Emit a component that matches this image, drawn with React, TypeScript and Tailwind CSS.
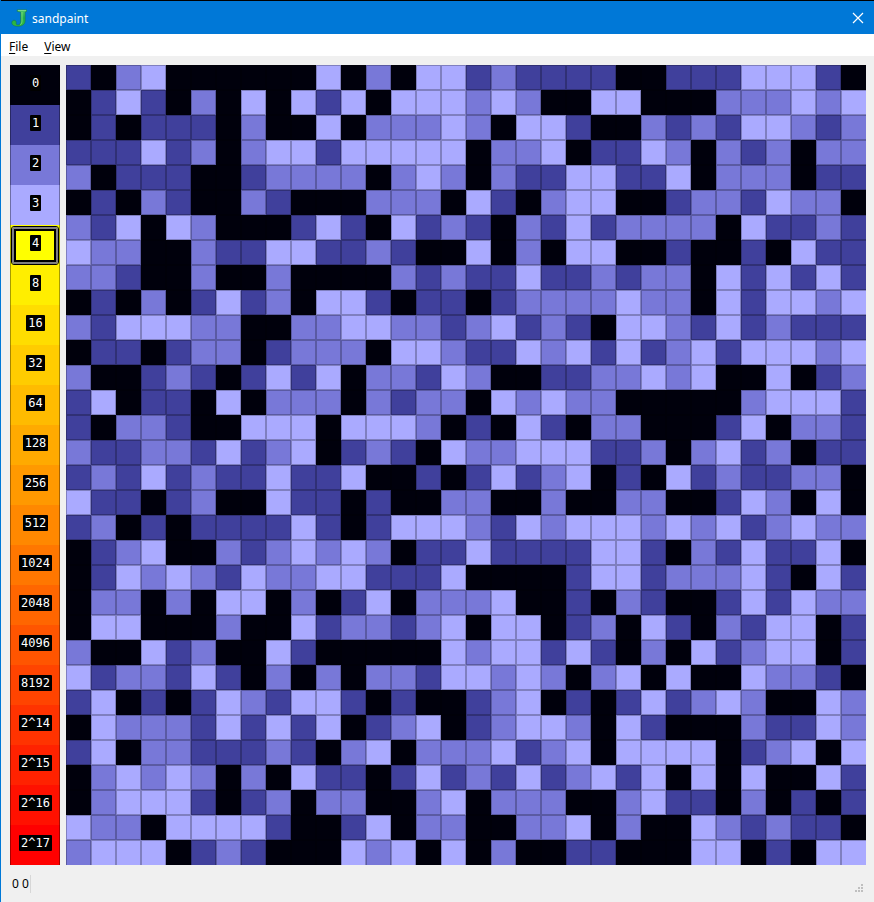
import { useState } from "react";

const swatches = [
  { label: "0", color: "bg-[#00000c]" },
  { label: "1", color: "bg-[#40409c]" },
  { label: "2", color: "bg-[#7878d8]" },
  { label: "3", color: "bg-[#aaaaff]" },
  { label: "4", color: "bg-[#ffff00]" },
  { label: "8", color: "bg-[#ffee00]" },
  { label: "16", color: "bg-[#ffdd00]" },
  { label: "32", color: "bg-[#ffcc00]" },
  { label: "64", color: "bg-[#ffbb00]" },
  { label: "128", color: "bg-[#ffaa00]" },
  { label: "256", color: "bg-[#ff9900]" },
  { label: "512", color: "bg-[#ff8800]" },
  { label: "1024", color: "bg-[#ff7700]" },
  { label: "2048", color: "bg-[#ff6600]" },
  { label: "4096", color: "bg-[#ff5500]" },
  { label: "8192", color: "bg-[#ff4400]" },
  { label: "2^14", color: "bg-[#ff3300]" },
  { label: "2^15", color: "bg-[#ff2200]" },
  { label: "2^16", color: "bg-[#ff1100]" },
  { label: "2^17", color: "bg-[#ff0000]" },
];

// One digit per cell: the number of sand grains, 0 to 3.
const rows = [
  "10230000003020331211110011133310",
  "01310203031303332320033000222323",
  "01011102003022232033100212133212",
  "11131202331333330223011320212022",
  "20111001222202320211331130222011",
  "01021002100022203102330012213220",
  "21303200013103121021312222031121",
  "32200211331121003020330010010311",
  "22100200200002121131121220313131",
  "01020131203310110122223220313323",
  "21333220022332212312103321312111",
  "01101220122203321132313123133323",
  "20012101313022132001122323003012",
  "13011030222021220323220000023331",
  "10221003330333201031022000130221",
  "21122131230121032233311202312011",
  "12131211311300101312301031211220",
  "31101200311010022002002200132030",
  "12010111131013332132333232312322",
  "01230021232320113111133102131130",
  "01323213223311130000133122231031",
  "02202033020130222300102100131322",
  "03300020031221230330120310213301",
  "20031200310000032331310203123301",
  "31221310202022133232023030032210",
  "13010132133101001230101312320032",
  "03222131313012301233203100021132",
  "13022111210230222312303333012303",
  "02323202031101312131231303030031",
  "02333101202200230222002311020101",
  "32203333100130220022302003212110",
  "23330121000323030200110003301033",
];

function Cell({ value, lastCol, lastRow }: { value: number; lastCol: boolean; lastRow: boolean }) {
  return (
    <div
      className={`aspect-square border-l border-t border-black/25 ${swatches[value].color} ${
        lastCol ? "" : "border-r"
      } ${lastRow ? "" : "border-b"}`}
    />
  );
}

function Logo() {
  return (
    <svg viewBox="0 0 16 18" className="h-[18px] w-4" aria-hidden="true">
      <defs>
        <linearGradient id="leaf" x1="0" y1="0" x2="0" y2="1">
          <stop offset="0" stopColor="#4fc86a" />
          <stop offset="0.5" stopColor="#1fae4c" />
          <stop offset="1" stopColor="#35bd3c" />
        </linearGradient>
      </defs>
      <path
        d="M6.2 .8H15.8V2.4L14.2 3V11.2C14.2 15.4 11.4 17.3 6.8 17.3C3 17.3 .8 15.9 .8 13.7C.8 12.2 1.8 11.3 3.1 11.3C4.5 11.3 5.3 12.2 5.3 13.3C5.3 14.2 5 14.6 5.2 15.1C5.5 15.7 6.2 15.9 6.9 15.9C8.8 15.9 9.6 14.6 9.6 12V3.2L6.2 2.4Z"
        fill="url(#leaf)"
        stroke="#14704a"
        strokeWidth="0.5"
      />
      <path d="M11 3V12.2C11 13.6 10.4 14.8 9.4 15.6" fill="none" stroke="#7fe07c" strokeWidth="0.9" />
      <path d="M7 1.5H15" stroke="#8fe49a" strokeWidth="0.7" />
    </svg>
  );
}

export default function App() {
  const [selected, setSelected] = useState(4);

  return (
    <div className="flex min-h-screen flex-col border-l border-[#0078d7] bg-[#f0f0f0] font-['Noto_Sans','Open_Sans',sans-serif] text-xs text-black">
      <header className="flex h-[34px] items-center border-t border-black bg-[#0078d7] pr-2 pl-[10px] text-white">
        <Logo />
        <h1 className="ml-[5px] flex-1 pt-[2px]">sandpaint</h1>
        <button type="button" aria-label="Close" className="flex size-4 items-center justify-center">
          <svg viewBox="0 0 12 12" className="size-3" aria-hidden="true">
            <path d="M1 1L11 11M11 1L1 11" stroke="currentColor" strokeWidth="1.2" />
          </svg>
        </button>
      </header>

      <nav className="flex h-[22px] items-center gap-4 bg-white px-2 pt-1">
        <button type="button">
          <span className="underline underline-offset-2">F</span>ile
        </button>
        <button type="button">
          <span className="underline underline-offset-2">V</span>iew
        </button>
      </nav>

      <main className="flex gap-[6px] pt-[9px] pr-2 pl-[9px]">
        <div className="flex w-[50px] shrink-0 flex-col">
          {swatches.map((s, i) => (
            <button
              key={s.label}
              type="button"
              aria-pressed={selected === i}
              onClick={() => setSelected(i)}
              className={`relative flex flex-1 justify-center border-x border-black/35 pt-[10px] font-['DejaVu_Sans_Mono',monospace] text-[12px] leading-4 text-white ${s.color}`}
            >
              <span className="ml-px h-4 self-start rounded-[1px] bg-black px-[2px]">{s.label}</span>
              {selected === i && (
                <span className="absolute inset-x-0 top-px bottom-0 rounded-[3px] border border-black">
                  <span className="block h-full rounded-[2px] border-2 border-[#808080]">
                    <span className="block h-full border-2 border-black" />
                  </span>
                </span>
              )}
            </button>
          ))}
        </div>

        <div
          role="img"
          aria-label="Sandpile"
          className="grid min-w-0 flex-1 grid-cols-[repeat(32,minmax(0,1fr))] self-start"
        >
          {rows.map((row, y) =>
            row
              .split("")
              .map((digit, x) => (
                <Cell key={`${y}-${x}`} value={Number(digit)} lastCol={x === 31} lastRow={y === rows.length - 1} />
              )),
          )}
        </div>
      </main>

      <footer className="flex h-[37px] items-center justify-between pr-[11px] pl-[11px]">
        <output className="border-r border-[#d7d7d7] pr-px leading-[18px]">0 0</output>
        <svg viewBox="0 0 8 8" className="mt-2 size-2" fill="#bfbfbf" aria-hidden="true">
          <path d="M6 0h2v2H6zM3 3h2v2H3zM6 3h2v2H6zM0 6h2v2H0zM3 6h2v2H3zM6 6h2v2H6z" />
        </svg>
      </footer>
    </div>
  );
}
